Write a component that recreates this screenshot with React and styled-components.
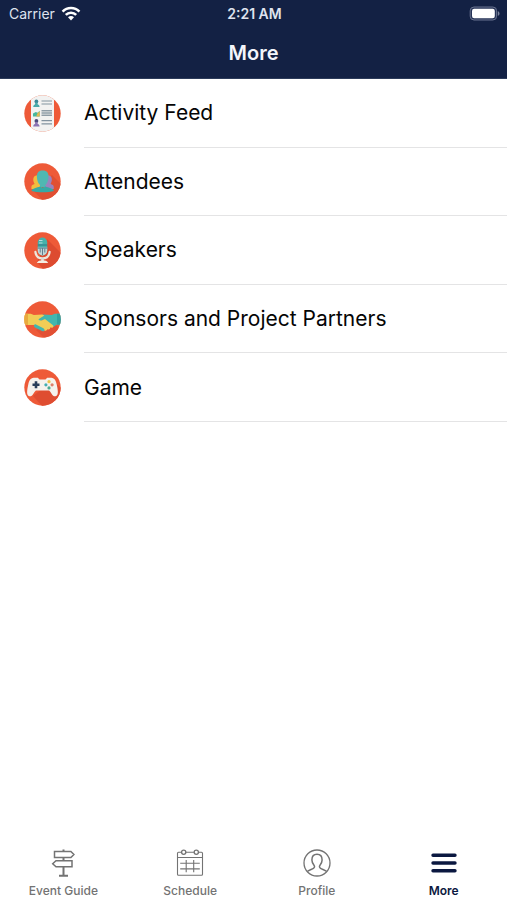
import React from "react";
import styled, { createGlobalStyle } from "styled-components";

const GlobalStyle = createGlobalStyle`
  *, *::before, *::after { box-sizing: border-box; }
  body {
    margin: 0;
    background: #fff;
    color: #050505;
    font-family: Inter, "Liberation Sans", sans-serif;
  }
`;

const Screen = styled.div`
  display: flex;
  flex-direction: column;
  min-height: 100vh;
`;

const Header = styled.header`
  background: #132144;
  color: #f3f5fb;
  border-bottom: 1px solid #2c3b5a;
`;

const StatusBar = styled.div`
  display: grid;
  grid-template-columns: 1fr auto 1fr;
  align-items: center;
  height: 27px;
  padding: 0 7px 0 9px;
  font-size: 14px;
  line-height: 16px;
  color: #dfe3ee;
`;

const Carrier = styled.div`
  display: flex;
  align-items: center;
  gap: 6px;
`;

const Clock = styled.time`
  font-weight: 600;
`;

const BatterySlot = styled.div`
  display: flex;
  justify-content: flex-end;
`;

const Title = styled.h1`
  margin: 0;
  padding: 13px 0 12px;
  font-size: 20px;
  line-height: 26px;
  font-weight: 600;
  text-align: center;
`;

const Menu = styled.ul`
  display: grid;
  grid-auto-rows: 1fr;
  min-height: 343px;
  margin: 0;
  padding: 0;
  list-style: none;
`;

const MenuItem = styled.li`
  display: flex;
`;

const MenuLink = styled.a`
  display: flex;
  flex: 1;
  align-items: center;
  gap: 23px;
  padding-left: 24px;
  color: inherit;
  text-decoration: none;

  svg { flex: none; }
`;

const MenuLabel = styled.span`
  display: flex;
  flex: 1;
  align-items: center;
  align-self: stretch;
  padding-top: 1px;
  border-bottom: 1px solid #e4e4e5;
  font-size: 21px;
  line-height: 28px;
`;

const TabBar = styled.nav`
  display: grid;
  grid-template-columns: repeat(4, 1fr);
  margin-top: auto;
  padding-bottom: 1px;
`;

const Tab = styled.a`
  display: flex;
  flex-direction: column;
  align-items: center;
  gap: 5px;
  color: ${(p) => (p.$active ? "#0b1840" : "#737373")};
  font-size: 12px;
  line-height: 16px;
  font-weight: ${(p) => (p.$active ? 600 : 500)};
  text-decoration: none;
`;

const WifiIcon = () => (
  <svg width="20" height="15" viewBox="0 0 20 15" fill="none" stroke="#fff" strokeWidth="2.6" aria-hidden="true">
    <path d="M1.6 5.6C6.2.8 13.8.8 18.4 5.6" />
    <path d="M4.8 8.9c2.9-2.9 7.5-2.9 10.4 0" />
    <path d="M10 14.4 7 11.3c1.7-1.6 4.3-1.6 6 0z" fill="#fff" stroke="none" />
  </svg>
);

const BatteryIcon = () => (
  <svg width="31" height="15" viewBox="0 0 31 15" aria-hidden="true">
    <rect x="1.2" y="1" width="26.4" height="13" rx="3.8" fill="#263357" stroke="#69738f" />
    <rect x="3" y="2.8" width="22.8" height="9.4" rx="2.2" fill="#fff" />
    <path d="M28.8 5.2c2.3.7 2.3 3.9 0 4.6z" fill="#7b849d" />
  </svg>
);

const Disc = ({ id, children }) => (
  <svg width="37" height="37" viewBox="0 0 37 37" aria-hidden="true">
    <clipPath id={id}>
      <circle cx="18.5" cy="18.5" r="18.2" />
    </clipPath>
    <g clipPath={`url(#${id})`}>
      <rect width="37" height="37" fill="#ee5a38" />
      {children}
    </g>
  </svg>
);

const FeedIcon = () => (
  <Disc id="feed">
    <rect x="7" width="23" height="37" fill="#f2f2f1" />
    <circle cx="12.4" cy="6.5" r="1.9" fill="#3b8796" />
    <path d="M11.4 7.5h2l.4 2.1c1.2.4 1.6 1.1 1.8 2.4H9.2c.2-1.3.7-2 1.8-2.4z" fill="#48a9a9" />
    <path d="M9 21.4v-3l2.8-1.5 1.7.8 2.2-1.9v5.6z" fill="#48b69c" />
    <path d="m12.2 21.4 1.4-3.4 2.1-1.8v5.2z" fill="#e5b84e" />
    <circle cx="12.4" cy="26" r="1.9" fill="#4a4a7c" />
    <path d="M11.4 27h2l.4 2.1c1.2.4 1.6 1.1 1.8 2.4H9.2c.2-1.3.7-2 1.8-2.4z" fill="#8972b2" />
    <path d="M17.5 6H28M17.5 9H28M17.5 25.7H28M17.5 28.8H28" stroke="#82939f" strokeWidth="1.2" />
    <path d="M17.5 15.8H28M17.5 18H28M17.5 20.2H28" stroke="#8f9da7" strokeWidth="1.4" />
  </Disc>
);

const AttendeesIcon = () => (
  <Disc id="attendees">
    <path d="m28 12 12 12v13H18l-8-9z" fill="#e04f32" />
    <path d="M7.4 24c0-2 1.6-2.4 3.2-3.1-2.5-4.6-1.4-8.6 3.1-8.7 2 0 3.2 1 3.8 2.6V26H7.4z" fill="#f0bd3f" />
    <path d="M29.8 24c0-2-1.6-2.4-3.2-3.1 2.5-4.6 1.4-8.6-3.1-8.7-2 0-3.2 1-3.8 2.6V26h10.1z" fill="#9a83bd" />
    <path d="M18.7 7.5c4.4 0 6.1 2.6 5.8 6.8-.2 3.7-1.5 6.4-3.1 7.8v2h-5.4v-2c-1.6-1.4-2.9-4.1-3.1-7.8-.2-4.2 1.4-6.8 5.8-6.8z" fill="#4fb8b2" />
    <path d="M7.6 28c.3-2.9 5.5-3.4 8.4-4.6 1.5 1.5 4 1.5 5.4 0 2.9 1.2 8.2 1.7 8.4 4.6-5.2 1.8-17.2 1.8-22.2 0z" fill="#36aaa5" />
  </Disc>
);

const MicIcon = () => (
  <Disc id="mic">
    <path d="m23 7 15 15v15H19l-6-7z" fill="#dd4b30" />
    <path d="M11.4 19.8c.4 4.2 3 6.6 7.1 6.6s6.7-2.4 7.1-6.6" fill="none" stroke="#ede7dc" strokeWidth="2.2" strokeLinecap="round" />
    <path d="M18.5 26v3" stroke="#d9dedb" strokeWidth="2.6" />
    <path d="M12.8 31c.9-2 3-2.7 5.7-2.7s4.8.7 5.7 2.7z" fill="#f4eee2" />
    <rect x="13.8" y="5.5" width="9.4" height="18" rx="4.7" fill="#45b2aa" />
    <path d="M13.8 15h9.4v3.8a4.7 4.7 0 0 1-9.4 0z" fill="#c2d7d8" />
    <path d="M15 8.5h3.5M15 11h3.5" stroke="#b8dce0" strokeWidth="1" />
    <path d="M13.8 13h9.4M13.8 16h9.4" stroke="#2e7586" strokeWidth="1.2" />
    <path d="M18.5 16v7M16.2 16.5v4M20.8 16.5v4" stroke="#607f91" strokeWidth="1" />
  </Disc>
);

const HandshakeIcon = () => (
  <Disc id="handshake">
    <path d="m20 25 10-3 7 7v8H20l-8-8z" fill="#e25034" />
    <path d="M37 12.8h-6.2l-3 1.2-8.8-.6-5.7 4.7 2 2.3 5-1.6 9.3 7 3-2.1H37z" fill="#43b6ae" />
    <path d="M0 12.8h6.8l3 1.2 8.4-.6 2.2 1-6 3.8c1.4 2.3 4.2 1.3 6.6-.2l8 6.3c1.4 1.3-.2 3-1.8 2.2l-1 .1c.2 1.9-1.6 2.4-3 1.6-.4 1.7-2.3 1.9-4.2.8L11 24H0z" fill="#f1cd56" />
    <path d="m12 23.4 7.4 3.8c2.2 1.3.9 3.9-1.4 2.7l-6.6-3.1c-2.4-1.2-1.4-4.1.6-3.4z" fill="#43b6ae" />
    <path d="M0 12.8h4V24H0z" fill="#e8aa3f" />
    <path d="M33 12.8h4v10.8h-4z" fill="#31a2a1" />
  </Disc>
);

const GameIcon = () => (
  <Disc id="game">
    <path d="m29 11 9 9v17H18l-9-10z" fill="#df4d31" />
    <path d="M9.7 8.8h4.1l1.7 1.7h6l1.7-1.7h4.1c3.4.6 4.6 2.7 5.4 6.5 1 4.9 2.5 11.4-1.2 11.9-3.2.4-4.3-4.1-6.4-5.8H11.9c-2.1 1.7-3.2 6.2-6.4 5.8-3.7-.5-2.2-7-1.2-11.9.8-3.8 2-5.9 5.4-6.5z" fill="#f5f2ed" />
    <path d="M12 12.2v7M8.5 15.7h7" stroke="#293d59" strokeWidth="2.6" />
    <circle cx="25" cy="12.7" r="1.6" fill="#efc548" />
    <circle cx="25" cy="18.9" r="1.6" fill="#4ca991" />
    <circle cx="21.9" cy="15.8" r="1.6" fill="#43aeb2" />
    <circle cx="28.1" cy="15.8" r="1.6" fill="#dd806b" />
  </Disc>
);

const TabGlyph = ({ children }) => (
  <svg width="30" height="30" viewBox="0 0 30 30" fill="none" stroke="currentColor" strokeWidth="1.3" aria-hidden="true">
    {children}
  </svg>
);

const SignpostIcon = () => (
  <TabGlyph>
    <path d="M6.5 3.5h16.4l3 3-3 3H6.5zM24 12.7H8l-3.3 3 3.3 3h16z" strokeWidth="1.5" />
    <path d="M15.5 1.5v2M15.5 9.5v3.2M15.5 18.7V28M11 27.7h9" strokeWidth="2" />
  </TabGlyph>
);

const CalendarIcon = () => (
  <TabGlyph>
    <path d="M6.7 4.2H3.5a1 1 0 0 0-1 1v21.1a1 1 0 0 0 1 1h23a1 1 0 0 0 1-1V5.2a1 1 0 0 0-1-1h-3.2M10.8 4.2h8.4M2.5 9.5h25" strokeWidth="1.1" />
    <circle cx="8.7" cy="4.2" r="2.1" />
    <circle cx="21.3" cy="4.2" r="2.1" />
    <path d="M5.2 15.3h19.6M5.2 20.9h19.6M11.2 12v12.2M18.7 12v12.2" strokeWidth="1.1" />
  </TabGlyph>
);

const ProfileIcon = () => (
  <TabGlyph>
    <circle cx="15" cy="15" r="13" />
    <path d="M5.3 23.6c1.5-1.6 4.3-2.1 6.1-3.2 1.3-.8 1.5-2 .6-3.2-1.5-1.8-2.1-3.3-2.1-5.2 0-3.7 1.9-5.7 5.1-5.7s5.1 2 5.1 5.7c0 1.9-.6 3.4-2.1 5.2-.9 1.2-.7 2.4.6 3.2 1.8 1.1 4.6 1.6 6.1 3.2" strokeWidth="1.5" />
  </TabGlyph>
);

const BarsIcon = () => (
  <TabGlyph>
    <path d="M4 7.3h22M4 15h22M4 22.7h22" strokeWidth="3.4" strokeLinecap="round" />
  </TabGlyph>
);

const MENU = [
  { label: "Activity Feed", Icon: FeedIcon },
  { label: "Attendees", Icon: AttendeesIcon },
  { label: "Speakers", Icon: MicIcon },
  { label: "Sponsors and Project Partners", Icon: HandshakeIcon },
  { label: "Game", Icon: GameIcon },
];

const TABS = [
  { label: "Event Guide", Icon: SignpostIcon },
  { label: "Schedule", Icon: CalendarIcon },
  { label: "Profile", Icon: ProfileIcon },
  { label: "More", Icon: BarsIcon, active: true },
];

export default function App() {
  return (
    <Screen>
      <GlobalStyle />
      <Header>
        <StatusBar>
          <Carrier>
            Carrier
            <WifiIcon />
          </Carrier>
          <Clock>2:21 AM</Clock>
          <BatterySlot>
            <BatteryIcon />
          </BatterySlot>
        </StatusBar>
        <Title>More</Title>
      </Header>
      <main>
        <Menu>
          {MENU.map(({ label, Icon }) => (
            <MenuItem key={label}>
              <MenuLink href="#">
                <Icon />
                <MenuLabel>{label}</MenuLabel>
              </MenuLink>
            </MenuItem>
          ))}
        </Menu>
      </main>
      <TabBar>
        {TABS.map(({ label, Icon, active }) => (
          <Tab key={label} href="#" $active={active} aria-current={active ? "page" : undefined}>
            <Icon />
            {label}
          </Tab>
        ))}
      </TabBar>
    </Screen>
  );
}
